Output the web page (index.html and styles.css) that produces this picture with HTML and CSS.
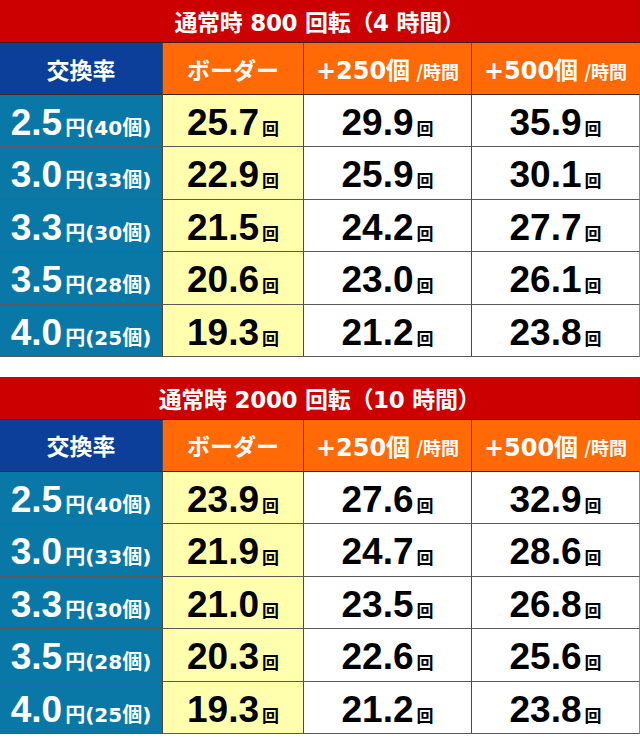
FILE: index.html
```html
<!DOCTYPE html>
<html lang="ja">
<head>
<meta charset="utf-8">
<title>ボーダー表</title>
<link rel="stylesheet" href="styles.css">
</head>
<body>
<div class="page">
  <section class="board">
    <div class="title">通常時 800 回転（4 時間）</div>
    <div class="grid">
      <div class="cell head blue">交換率</div>
      <div class="cell head orange">ボーダー</div>
      <div class="cell head orange"><span class="hbig">+250個</span><span class="hsmall">/時間</span></div>
      <div class="cell head orange last"><span class="hbig">+500個</span><span class="hsmall">/時間</span></div>

      <div class="cell rate"><span class="rbig">2.5</span><span class="rsmall">円(40個)</span></div>
      <div class="cell val yellow"><span class="num">25.7</span><span class="kai">回</span></div>
      <div class="cell val"><span class="num">29.9</span><span class="kai">回</span></div>
      <div class="cell val last"><span class="num">35.9</span><span class="kai">回</span></div>

      <div class="cell rate"><span class="rbig">3.0</span><span class="rsmall">円(33個)</span></div>
      <div class="cell val yellow"><span class="num">22.9</span><span class="kai">回</span></div>
      <div class="cell val"><span class="num">25.9</span><span class="kai">回</span></div>
      <div class="cell val last"><span class="num">30.1</span><span class="kai">回</span></div>

      <div class="cell rate"><span class="rbig">3.3</span><span class="rsmall">円(30個)</span></div>
      <div class="cell val yellow"><span class="num">21.5</span><span class="kai">回</span></div>
      <div class="cell val"><span class="num">24.2</span><span class="kai">回</span></div>
      <div class="cell val last"><span class="num">27.7</span><span class="kai">回</span></div>

      <div class="cell rate"><span class="rbig">3.5</span><span class="rsmall">円(28個)</span></div>
      <div class="cell val yellow"><span class="num">20.6</span><span class="kai">回</span></div>
      <div class="cell val"><span class="num">23.0</span><span class="kai">回</span></div>
      <div class="cell val last"><span class="num">26.1</span><span class="kai">回</span></div>

      <div class="cell rate"><span class="rbig">4.0</span><span class="rsmall">円(25個)</span></div>
      <div class="cell val yellow"><span class="num">19.3</span><span class="kai">回</span></div>
      <div class="cell val"><span class="num">21.2</span><span class="kai">回</span></div>
      <div class="cell val last"><span class="num">23.8</span><span class="kai">回</span></div>
    </div>
  </section>

  <section class="board second">
    <div class="title">通常時 2000 回転（10 時間）</div>
    <div class="grid">
      <div class="cell head blue">交換率</div>
      <div class="cell head orange">ボーダー</div>
      <div class="cell head orange"><span class="hbig">+250個</span><span class="hsmall">/時間</span></div>
      <div class="cell head orange last"><span class="hbig">+500個</span><span class="hsmall">/時間</span></div>

      <div class="cell rate"><span class="rbig">2.5</span><span class="rsmall">円(40個)</span></div>
      <div class="cell val yellow"><span class="num">23.9</span><span class="kai">回</span></div>
      <div class="cell val"><span class="num">27.6</span><span class="kai">回</span></div>
      <div class="cell val last"><span class="num">32.9</span><span class="kai">回</span></div>

      <div class="cell rate"><span class="rbig">3.0</span><span class="rsmall">円(33個)</span></div>
      <div class="cell val yellow"><span class="num">21.9</span><span class="kai">回</span></div>
      <div class="cell val"><span class="num">24.7</span><span class="kai">回</span></div>
      <div class="cell val last"><span class="num">28.6</span><span class="kai">回</span></div>

      <div class="cell rate"><span class="rbig">3.3</span><span class="rsmall">円(30個)</span></div>
      <div class="cell val yellow"><span class="num">21.0</span><span class="kai">回</span></div>
      <div class="cell val"><span class="num">23.5</span><span class="kai">回</span></div>
      <div class="cell val last"><span class="num">26.8</span><span class="kai">回</span></div>

      <div class="cell rate"><span class="rbig">3.5</span><span class="rsmall">円(28個)</span></div>
      <div class="cell val yellow"><span class="num">20.3</span><span class="kai">回</span></div>
      <div class="cell val"><span class="num">22.6</span><span class="kai">回</span></div>
      <div class="cell val last"><span class="num">25.6</span><span class="kai">回</span></div>

      <div class="cell rate"><span class="rbig">4.0</span><span class="rsmall">円(25個)</span></div>
      <div class="cell val yellow"><span class="num">19.3</span><span class="kai">回</span></div>
      <div class="cell val"><span class="num">21.2</span><span class="kai">回</span></div>
      <div class="cell val last"><span class="num">23.8</span><span class="kai">回</span></div>
    </div>
  </section>
</div>
</body>
</html>
```

FILE: styles.css
```css
* { box-sizing: border-box; }
html, body { margin: 0; padding: 0; background: #ffffff; }
body {
  width: 640px;
  font-family: "DejaVu Sans", "Noto Sans CJK JP", sans-serif;
}
.page { width: 640px; }
.board { width: 640px; }
.board.second { margin-top: 20px; }

.title {
  height: 43px;
  background: #cc0000;
  color: #ffffff;
  font-weight: bold;
  font-size: 23px;
  display: flex;
  align-items: center;
  justify-content: center;
  border-bottom: 1px solid #3a2020;
  border-right: 1px solid #7a1010;
  letter-spacing: -0.3px;
}

.grid {
  display: grid;
  grid-template-columns: 163px 141px 168px 168px;
  grid-template-rows: 52px repeat(5, 52.4px);
}

.cell {
  display: flex;
  align-items: center;
  justify-content: center;
  border-right: 1px solid #4a4a4a;
  border-bottom: 1px solid #5a5a5a;
  white-space: nowrap;
}
.cell.last { border-right: 1px solid #8a8a8a; }

.head {
  color: #ffffff;
  font-weight: bold;
  font-family: "Noto Sans CJK JP", sans-serif;
  font-size: 23px;
  border-bottom-color: #3a2a20;
}
.blue { background: #0c3f99; }
.orange { background: #ff6a06; }

.hbig {
  font-family: "DejaVu Sans", "Noto Sans CJK JP", sans-serif;
  font-size: 24px;
  font-weight: bold;
}
.hsmall {
  font-family: "Noto Sans CJK JP", sans-serif;
  font-size: 18px;
  font-weight: bold;
  margin-left: 6px;
  position: relative;
  top: 2px;
}

.rate {
  background: #0a78a7;
  color: #ffffff;
  align-items: baseline;
  padding-top: 6px;
}
.rbig {
  font-family: "Liberation Sans", sans-serif;
  font-weight: bold;
  font-size: 37px;
  line-height: 44px;
}
.rsmall {
  font-family: "DejaVu Sans", "Noto Sans CJK JP", sans-serif;
  font-weight: bold;
  font-size: 20px;
  margin-left: 3px;
}

.val {
  background: #ffffff;
  color: #000000;
  align-items: baseline;
  padding-top: 6px;
}
.val.yellow { background: #ffffae; }
.num {
  font-family: "Liberation Sans", sans-serif;
  font-weight: bold;
  font-size: 37px;
  line-height: 44px;
}
.kai {
  font-family: "Noto Sans CJK JP", sans-serif;
  font-weight: bold;
  font-size: 17px;
  margin-left: 3px;
}
```
